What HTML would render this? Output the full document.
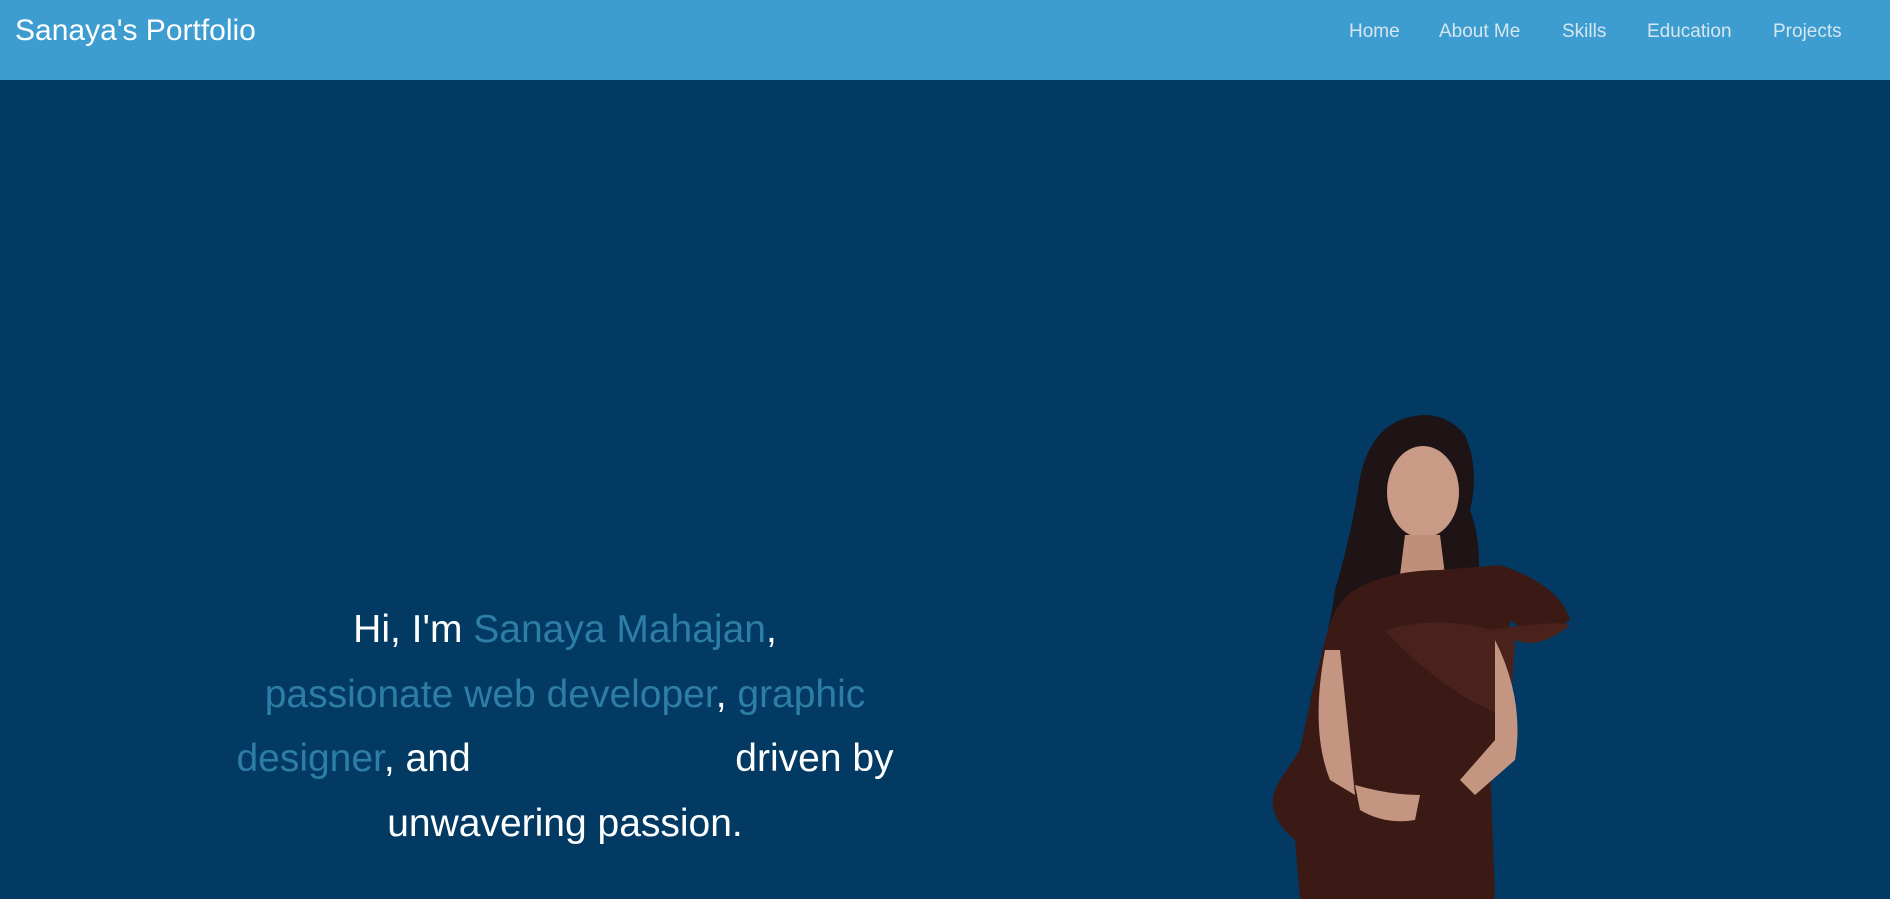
<!DOCTYPE html>
<html><head><meta charset="utf-8"><style>
html,body{margin:0;padding:0;width:1890px;height:899px;overflow:hidden;background:#023a63;font-family:"Liberation Sans",Arial,sans-serif}
.nav{position:absolute;left:0;top:0;width:1890px;height:80px;background:#3d9dd0}
.logo{position:absolute;left:15px;top:14px;font-size:30px;color:#fff}
.links a{position:absolute;top:21px;font-size:19px;color:#d6e6f0;text-decoration:none}
.hero{position:absolute;left:220px;top:598px;width:690px;text-align:center;font-size:39px;line-height:64.5px;color:#fff}
.c{color:#2d7da6}
.gap{display:inline-block;width:243px}
</style></head><body>
<div class="nav"><div class="logo">Sanaya's Portfolio</div>
<div class="links"><a style="left:1349px">Home</a><a style="left:1439px">About Me</a><a style="left:1562px">Skills</a><a style="left:1647px">Education</a><a style="left:1773px">Projects</a></div></div>
<div class="hero">Hi, I'm <span class="c">Sanaya Mahajan</span>,<br><span class="c">passionate web developer</span>, <span class="c">graphic designer</span>, and <span class="gap"></span> driven by<br>unwavering passion.</div>
<svg style="position:absolute;left:1240px;top:400px" width="380" height="499" viewBox="0 0 380 499">
<path d="M160 20 Q200 5 225 35 Q240 70 230 110 Q245 150 235 200 L180 230 L120 330 Q95 340 70 300 Q90 230 95 190 Q110 140 118 90 Q125 35 160 20Z" fill="#1e1416"/>
<ellipse cx="183" cy="92" rx="36" ry="46" fill="#c99a86"/>
<path d="M165 135 L200 135 L205 175 L160 175Z" fill="#c08f7a"/>
<path d="M115 190 Q150 170 200 170 L260 165 Q320 185 330 220 Q300 245 270 220 L265 270 Q265 330 250 360 L255 499 L60 499 L55 440 Q20 410 40 380 L60 350 Q70 300 85 240 Q95 200 115 190Z" fill="#3b1a16"/>
<path d="M145 230 Q200 215 250 230 Q315 220 330 225 Q300 250 275 240 L270 320 Q250 310 230 300 Q180 270 145 230Z" fill="#4a221b"/>
<path d="M85 250 Q70 330 90 380 L115 395 L100 250Z" fill="#c49580"/>
<path d="M255 240 Q285 300 275 360 L235 395 L220 380 L255 340Z" fill="#c49580"/>
<path d="M115 385 Q150 395 180 395 L175 420 Q145 425 120 410Z" fill="#c49580"/>
</svg>
</body></html>
